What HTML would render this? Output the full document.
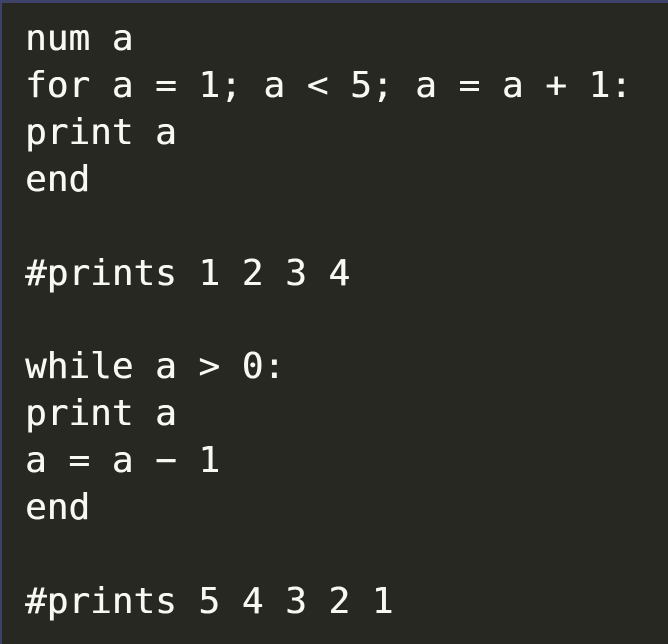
<!DOCTYPE html>
<html><head><style>
html,body{margin:0;padding:0;background:#272822;}
body{width:668px;height:644px;overflow:hidden;box-sizing:border-box;border-top:3px solid #3e4268;border-left:2px solid #3e4268;}
pre{margin:0;padding:13px 0 0 23px;font-family:"DejaVu Sans Mono",monospace;font-size:36px;line-height:46.9px;color:#f8f8f2;text-shadow:0.4px 0 0 #f8f8f2;}
</style></head><body><pre>num a
for a = 1; a &lt; 5; a = a + 1:
print a
end

#prints 1 2 3 4

while a &gt; 0:
print a
a = a − 1
end

#prints 5 4 3 2 1</pre></body></html>
